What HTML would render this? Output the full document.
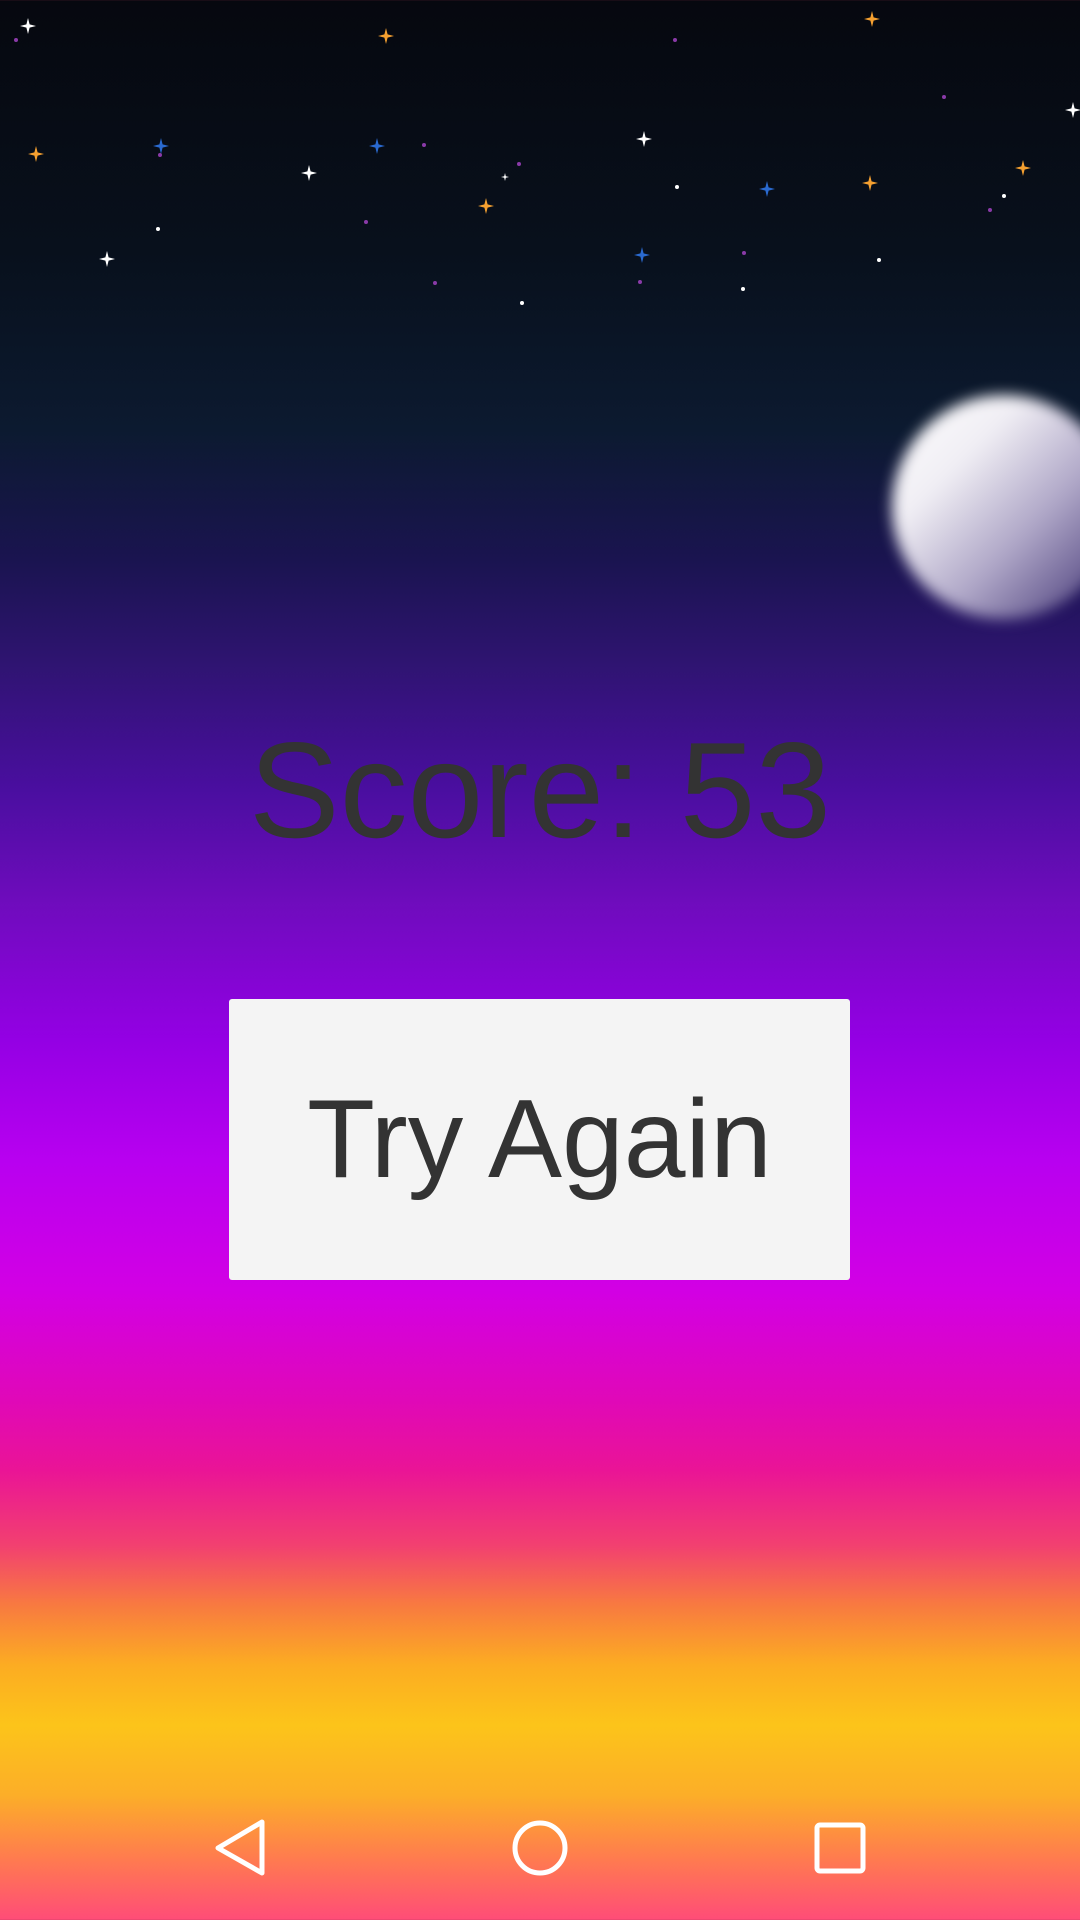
<!DOCTYPE html>
<html><head><meta charset="utf-8"><style>
html,body{margin:0;padding:0;}
body{width:1080px;height:1920px;position:relative;overflow:hidden;font-family:"Liberation Sans",sans-serif;
background:linear-gradient(to bottom,#06080f 0px,#08101c 250px,#0c1a30 430px,#1a1450 560px,#2e1470 660px,#4a0ea0 790px,#6e0cbc 900px,#9400e4 1040px,#b800f0 1160px,#d200e4 1290px,#e008b8 1400px,#ea1496 1470px,#f24070 1545px,#f87a40 1605px,#fcac22 1665px,#fcc41a 1725px,#fcae28 1795px,#ff7a50 1860px,#ff4c78 1920px);}
.moon{position:absolute;left:892px;top:395px;width:224px;height:224px;border-radius:50%;
background:linear-gradient(135deg,#ffffff 0%,#f0eef4 30%,#b0a8c8 60%,#3c2e70 100%);filter:blur(7px);}
.score{position:absolute;left:0;width:1080px;top:722px;text-align:center;font-size:136px;color:#333;line-height:136px;}
.btn{position:absolute;left:229px;top:999px;width:621px;height:281px;background:#f4f4f4;border-radius:3px;text-align:center;line-height:281px;font-size:111px;color:#333;}
svg{position:absolute;left:0;top:0;}
</style></head><body>
<svg width="1080" height="1920">
<defs><path id="s" d="M0,-8 L1.6,-1.6 L8,0 L1.6,1.6 L0,8 L-1.6,1.6 L-8,0 L-1.6,-1.6Z"/></defs>
<g fill="#fff">
<use href="#s" x="28" y="26"/><use href="#s" x="107" y="259"/><use href="#s" x="309" y="173"/><use href="#s" x="644" y="139"/><use href="#s" x="1073" y="110"/>
<use href="#s" x="505" y="177" transform="translate(252.5,88.5) scale(.5)"/>
</g>
<g fill="#fff">
<circle cx="158" cy="229" r="2"/><circle cx="677" cy="187" r="2"/><circle cx="1004" cy="196" r="2"/><circle cx="879" cy="260" r="2"/><circle cx="743" cy="289" r="2"/><circle cx="522" cy="303" r="2"/>
</g>
<g fill="#f5a030"><use href="#s" x="386" y="36"/><use href="#s" x="872" y="19"/><use href="#s" x="36" y="154"/><use href="#s" x="486" y="206"/><use href="#s" x="870" y="183"/><use href="#s" x="1023" y="168"/></g>
<g fill="#2a6ad0"><use href="#s" x="161" y="146"/><use href="#s" x="377" y="146"/><use href="#s" x="767" y="189"/><use href="#s" x="642" y="255"/></g>
<g fill="#8a3aa8"><circle cx="16" cy="40" r="2"/><circle cx="424" cy="145" r="2"/><circle cx="519" cy="164" r="2"/><circle cx="366" cy="222" r="2"/><circle cx="435" cy="283" r="2"/><circle cx="675" cy="40" r="2"/><circle cx="944" cy="97" r="2"/><circle cx="990" cy="210" r="2"/><circle cx="744" cy="253" r="2"/><circle cx="640" cy="282" r="2"/><circle cx="160" cy="155" r="2"/></g>
<g fill="none" stroke="#fff" stroke-width="5" stroke-linejoin="round">
<path d="M262,1822 L262,1873 L218,1848 Z"/>
<circle cx="540" cy="1848" r="25"/>
<rect x="817" y="1825" width="46" height="46" rx="3"/>
</g>
</svg>
<div class="moon"></div>
<div class="score">Score: 53</div>
<div class="btn">Try Again</div>
</body></html>
